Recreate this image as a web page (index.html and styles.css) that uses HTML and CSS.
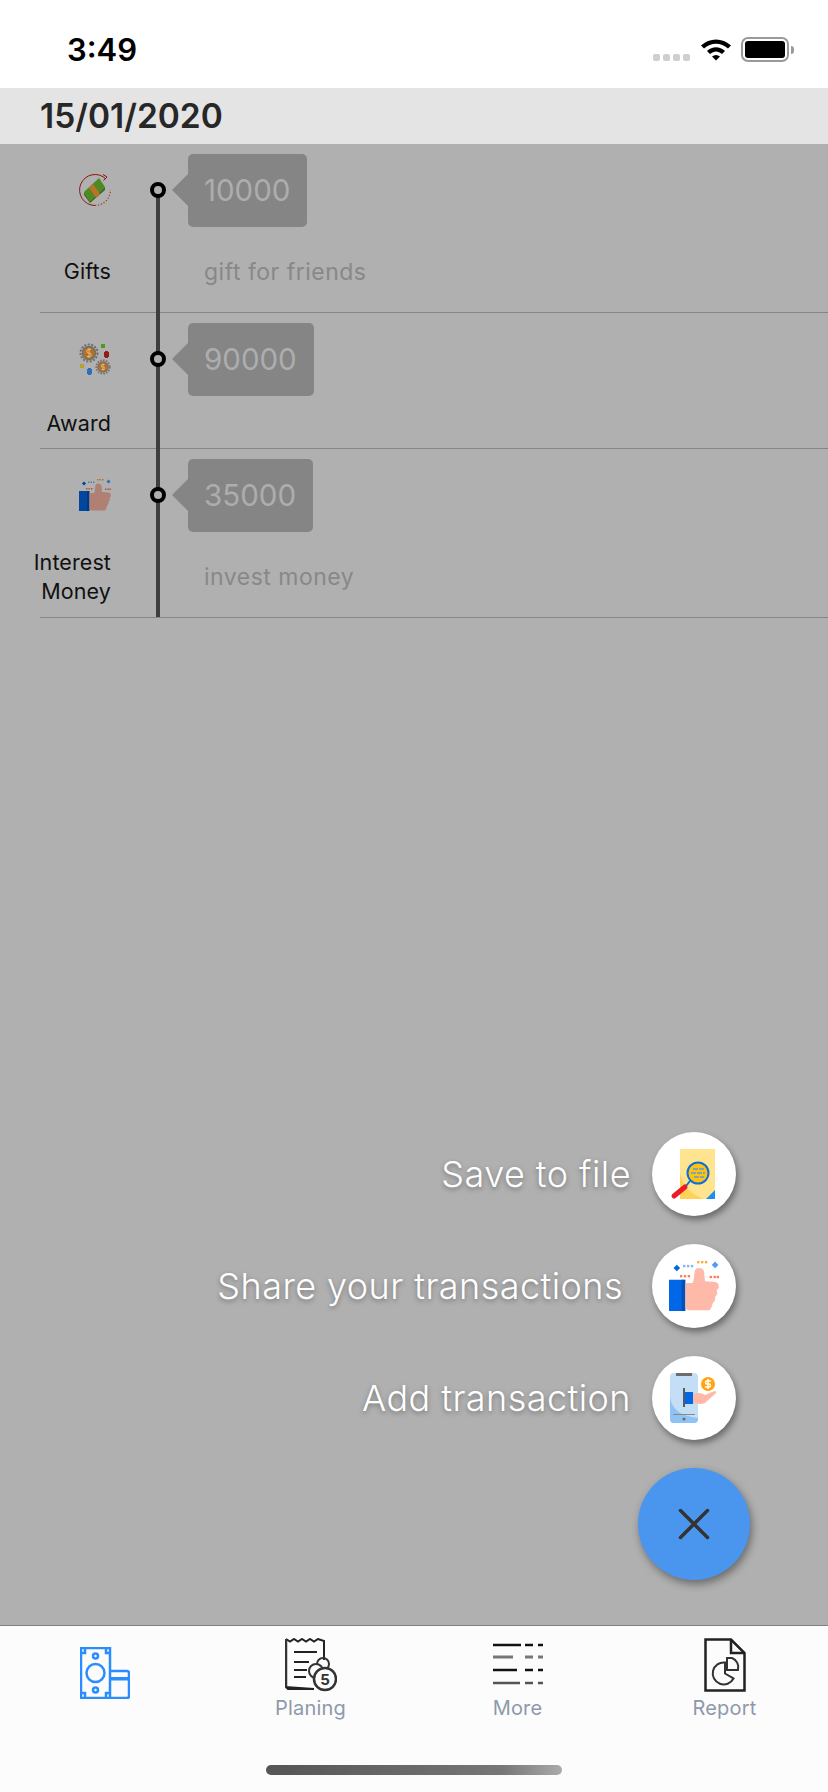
FILE: index.html
```html
<!DOCTYPE html>
<html lang="en">
<head>
<meta charset="utf-8">
<title>Transactions</title>
<link rel="stylesheet" href="styles.css">
</head>
<body>
<div class="app">
  <header class="status">
    <span class="time">3:49</span>
    <div class="status-icons">
      <div class="signal"><i></i><i></i><i></i><i></i></div>
      <svg class="wifi" width="32" height="24" viewBox="0 0 32 24">
        <path d="M1 8.500C9.500 .5 22.500 .5 31 8.500L28 11.500C21 5 11 5 4 11.500Z"/>
        <path d="M7 14C12.500 9 19.500 9 25 14L22 17C18 13.500 14 13.500 10 17Z"/>
        <path d="M12 19.500C14.500 17.500 17.500 17.500 20 19.500L16 23.500Z"/>
      </svg>
      <div class="battery"><div class="battery-body"><div class="battery-fill"></div></div><div class="battery-cap"></div></div>
    </div>
  </header>

  <div class="date-bar">15/01/2020</div>

  <main class="main">
    <section class="list">
      <article class="row row-a">
        <div class="cat">
          <svg class="cat-icon" viewBox="0 0 32 32">
            <path d="M27 5A15.500 15.500 0 1 0 16 31.500" fill="none" stroke="#8e1414" stroke-width="1"/>
            <path d="M24 .5L28 3L24.500 6.500" fill="none" stroke="#8e1414" stroke-width="1"/>
            <path d="M16 31.500A15.500 15.500 0 0 0 31.500 16" fill="none" stroke="#a5392b" stroke-width="1.200" stroke-dasharray="1.200 1.800"/>
            <path d="M5 18L20 4L26 13L11 27Z" fill="#4e8a22"/>
            <path d="M5 18L11 27L11 29L5 21Z" fill="#3f6e1c"/>
            <path d="M11 27L26 13L26 16L11 29Z" fill="#3a6a1a"/>
            <path d="M10 13.500L14 10L21 20L17 24Z" fill="#b9722a"/>
          </svg>
          <span class="cat-label">Gifts</span>
        </div>
        <div class="track"><span class="dot"></span><span class="line"></span></div>
        <div class="detail">
          <div class="bubble">10000</div>
          <p class="note">gift for friends</p>
        </div>
      </article>

      <article class="row row-b">
        <div class="cat">
          <svg class="cat-icon" viewBox="0 0 32 32">
            <circle cx="10" cy="10" r="8.500" fill="none" stroke="#6f6f6f" stroke-width="2" stroke-dasharray="2 1.500"/>
            <circle cx="10" cy="10" r="6.500" fill="#b8701f" stroke="#6f6f6f" stroke-width="1.500"/>
            <circle cx="24" cy="24" r="6.800" fill="none" stroke="#6f6f6f" stroke-width="1.600" stroke-dasharray="1.600 1.300"/>
            <circle cx="24" cy="24" r="5.200" fill="#b8701f" stroke="#6f6f6f" stroke-width="1.200"/>
            <path d="M12 6.500H9.500A1.500 1.500 0 0 0 9.500 10H10.500A1.500 1.500 0 0 1 10.500 13.500H8M10 5V15" fill="none" stroke="#dcc3a0" stroke-width=".9"/>
            <path d="M25.500 21.500H23.500A1 1 0 0 0 23.500 24H24.500A1 1 0 0 1 24.500 26.500H22.500M24 20.500V27.500" fill="none" stroke="#dcc3a0" stroke-width=".8"/>
            <rect x="22" y="1" width="4" height="4" fill="#4e9a1e"/>
            <rect x="25" y="9" width="5" height="5" fill="#961c1c"/>
            <rect x="26" y="8" width="3" height="7" fill="#961c1c"/>
            <rect x="1" y="21" width="4" height="4" fill="#b8a030"/>
            <rect x="8" y="26" width="5" height="5" fill="#2e6fb8"/>
            <rect x="9" y="25" width="3" height="7" fill="#2e6fb8"/>
          </svg>
          <span class="cat-label">Award</span>
        </div>
        <div class="track"><span class="dot"></span><span class="line"></span></div>
        <div class="detail">
          <div class="bubble">90000</div>
        </div>
      </article>

      <article class="row row-c">
        <div class="cat">
          <svg class="cat-icon cat-icon-dim" viewBox="0 0 32 32">
            <use href="#thumb"/>
          </svg>
          <span class="cat-label">Interest<br>Money</span>
        </div>
        <div class="track"><span class="dot"></span><span class="line"></span></div>
        <div class="detail">
          <div class="bubble">35000</div>
          <p class="note">invest money</p>
        </div>
      </article>
    </section>

    <section class="fab-menu">
      <div class="fab-item">
        <span class="fab-label">Save to file</span>
        <span class="mini">
          <svg class="mini-icon" viewBox="0 0 52 52">
            <path d="M12 1H47V51H12Z" fill="#ffe48f"/>
            <path d="M12 24C14 40 27 48 37 51H12Z" fill="#ffd257"/>
            <path d="M47 42V51H38Z" fill="#1e8cf5"/>
            <circle cx="30" cy="25" r="10.500" fill="#ffc20e" stroke="#0a6fdc" stroke-width="2"/>
            <path d="M25 21H37M23 25H37M26 29H36" stroke="#5a9fe0" stroke-width="1.500" stroke-dasharray="5 1"/>
            <path d="M22 33L18 38" stroke="#0a6fdc" stroke-width="2"/>
            <path d="M17 39L6 48" stroke="#e81d25" stroke-width="5" stroke-linecap="round"/>
          </svg>
        </span>
      </div>
      <div class="fab-item fab-item-share">
        <span class="fab-label">Share your transactions</span>
        <span class="mini">
          <svg class="mini-icon mini-thumb" viewBox="0 0 32 32">
            <use href="#thumb"/>
          </svg>
        </span>
      </div>
      <div class="fab-item">
        <span class="fab-label">Add transaction</span>
        <span class="mini">
          <svg class="mini-icon" viewBox="0 0 52 52">
            <rect x="2" y="1" width="28" height="50" rx="4" fill="#c4def6"/>
            <path d="M2 25C4 38 13 44 30 46V47A4 4 0 0 1 26 51H6A4 4 0 0 1 2 47Z" fill="#8fc3f3"/>
            <rect x="8" y="1" width="16" height="3" fill="#6d6d6d"/>
            <rect x="5" y="42" width="22" height="1" fill="#888"/>
            <circle cx="16" cy="47" r="1.500" fill="#6d6d6d"/>
            <rect x="15" y="16" width="2" height="19" fill="#5b5b5b"/>
            <rect x="17" y="20" width="8" height="12" fill="#0068e6"/>
            <path d="M25 22C30 20 34 21 37 23L44 20C47 18 50 20 47 22L37 31C32 33 28 31 25 31Z" fill="#ffb9a8"/>
            <circle cx="40" cy="12" r="7" fill="#ffa412"/>
            <path d="M43 9H39A1.500 1.500 0 0 0 39 12H41A1.500 1.500 0 0 1 41 15H37M40 7V17" fill="none" stroke="#fff" stroke-width="1.400"/>
          </svg>
        </span>
      </div>
      <button class="fab" type="button" aria-label="Close">
        <svg width="32" height="32" viewBox="0 0 32 32"><path d="M2.500 2.500L29.500 29.500M29.500 2.500L2.500 29.500" stroke="#333" stroke-width="3.500" stroke-linecap="round"/></svg>
      </button>
    </section>
  </main>

  <nav class="tabs">
    <div class="tab">
      <svg class="tab-icon tab-home" viewBox="0 0 50 52">
        <g fill="none" stroke="#2b8cff" stroke-width="2.500">
          <rect x="1" y="1" width="29" height="50"/>
          <circle cx="15.500" cy="26" r="9"/>
          <circle cx="15.500" cy="9" r="2.500"/>
          <circle cx="15.500" cy="43" r="2.500"/>
          <path d="M1 6H5V1M26 1V6H30M1 46H5V51M26 51V46H30"/>
          <path d="M30 24H47A2 2 0 0 1 49 26V49A2 2 0 0 1 47 51H30"/>
        </g>
        <rect x="30" y="30" width="19" height="3.500" fill="#2b8cff"/>
      </svg>
    </div>
    <div class="tab">
      <svg class="tab-icon tab-plan" viewBox="0 0 52 54">
        <path d="M1 1L5 3.500L9 1L13 3.500L17 1L21 3.500L25 1L29 3.500L33 1L39 3V22M29 51H3L1 49Z" fill="none" stroke="#222" stroke-width="2"/>
        <path d="M1 1V49" stroke="#333" stroke-width="2.500"/>
        <path d="M9 14H32M9 24H24M9 32H22M9 39H21" stroke="#222" stroke-width="2"/>
        <circle cx="38" cy="26" r="6" fill="none" stroke="#333" stroke-width="2"/>
        <circle cx="31" cy="33" r="7" fill="#fcfcfc" stroke="#333" stroke-width="2"/>
        <circle cx="40" cy="41" r="11" fill="#fcfcfc" stroke="#333" stroke-width="2.500"/>
        <text class="plan-s" x="40" y="46.500" text-anchor="middle">5</text>
      </svg>
      <span class="tab-label">Planing</span>
    </div>
    <div class="tab">
      <svg class="tab-icon tab-more" viewBox="0 0 50 44">
        <path d="M0 2H28M32 2H40M45 2H50" stroke="#111" stroke-width="2.500"/>
        <path d="M0 14H20M32 14H40M45 14H50" stroke="#777" stroke-width="3"/>
        <path d="M0 27H24M32 27H40M45 27H50" stroke="#111" stroke-width="2.500"/>
        <path d="M0 40H27M32 40H40M45 40H50" stroke="#555" stroke-width="2.500"/>
      </svg>
      <span class="tab-label">More</span>
    </div>
    <div class="tab">
      <svg class="tab-icon tab-report" viewBox="0 0 42 54">
        <path d="M1.500 1.500H27L40.500 15V52.500H1.500Z" fill="none" stroke="#222" stroke-width="2.500"/>
        <path d="M27 1.500V15H40.500" fill="none" stroke="#222" stroke-width="2.500"/>
        <path d="M21 24.500A11 11 0 1 0 29.500 40.500L21 35.500Z" fill="none" stroke="#333" stroke-width="2"/>
        <path d="M23 20V32H34A10 10 0 0 0 28 20Z" fill="none" stroke="#333" stroke-width="2"/>
      </svg>
      <span class="tab-label">Report</span>
    </div>
    <div class="home-bar"></div>
  </nav>
</div>

<svg class="defs" width="0" height="0" aria-hidden="true">
  <defs>
    <g id="thumb">
      <rect x="0" y="12" width="10" height="20" fill="#0068e6"/>
      <rect x="8" y="12" width="2.500" height="20" fill="#0052b8"/>
      <path d="M10.500 14L15 14Q16 12 16 10L16.500 6Q17 4.500 19 4.500Q22 4.500 22.500 7L23 13L30 13.500L31.500 14.500L32 17L30.500 19L31 21L29.500 23L29.500 25L28 27L27 30L26 31.500L12 31.500L10.500 30Z" fill="#ffb9a8"/>
      <rect x="3.500" y="3" width="3" height="3" fill="#0068e6" transform="rotate(45 5 4.500)"/>
      <g fill="#7fb5f0"><rect x="9" y="2.500" width="1.500" height="1.500"/><rect x="11.500" y="2.500" width="1.500" height="1.500"/><rect x="14" y="2.500" width="1.500" height="1.500"/></g>
      <rect x="28" y="1" width="3" height="3" fill="#4d9cf5" transform="rotate(45 29.500 2.500)"/>
      <g fill="#ffab30"><rect x="18" y="0" width="1.500" height="1.500"/><rect x="20.500" y="0" width="1.500" height="1.500"/><rect x="23" y="0" width="1.500" height="1.500"/></g>
      <g fill="#ff7a5c"><rect x="7" y="9" width="1.500" height="1.500"/><rect x="9.500" y="9" width="1.500" height="1.500"/><rect x="12" y="9" width="1.500" height="1.500"/><rect x="26" y="9.500" width="1.500" height="1.500"/><rect x="28.500" y="9.500" width="1.500" height="1.500"/><rect x="30.500" y="9.500" width="1.500" height="1.500"/></g>
    </g>
  </defs>
</svg>
</body>
</html>
```
FILE: styles.css
```css
* { box-sizing: border-box; }
html, body { margin: 0; padding: 0; }
body { font-family: Inter, "Liberation Sans", sans-serif; background: #fff; }
.defs { position: absolute; }

.app { width: 828px; height: 1792px; display: flex; flex-direction: column; overflow: hidden; }

.status { height: 88px; flex: none; background: #fff; display: flex; justify-content: space-between; padding: 0 34px 0 67px; }
.time { font-size: 31px; font-weight: 600; color: #000; line-height: 36px; margin-top: 32px; }
.status-icons { display: flex; align-items: flex-start; padding-top: 37px; }
.signal { display: flex; gap: 3px; margin-top: 17px; margin-right: 10px; }
.signal i { width: 7px; height: 7px; border-radius: 2px; background: #cfcfcf; display: block; }
.wifi { fill: #000; margin-right: 9px; }
.battery { display: flex; align-items: center; height: 25px; }
.battery-body { width: 48px; height: 25px; border: 2px solid #9a9a9a; border-radius: 7px; padding: 2px; }
.battery-fill { height: 100%; background: #000; border-radius: 3px; }
.battery-cap { width: 3px; height: 8px; background: #9a9a9a; border-radius: 0 3px 3px 0; margin-left: 2px; }

.date-bar { height: 56px; flex: none; background: #e4e4e4; color: #272727; font-size: 33.500px; font-weight: 600; line-height: 56px; padding-left: 40px; }

.main { flex: 1; background: #b0b0b0; display: flex; flex-direction: column; min-height: 0; }
.list { padding-left: 40px; }

.row { display: grid; grid-template-columns: 71px 55px 1fr; border-bottom: 1px solid #858585; }
.row-a { height: 169px; }
.row-b { height: 136px; }
.row-c { height: 169px; }

.cat { display: flex; flex-direction: column; align-items: flex-end; text-align: right; padding-top: 30px; margin-left: -30px; white-space: nowrap; }
.cat-icon { width: 32px; height: 32px; display: block; flex: none; }
.cat-icon-dim { filter: brightness(.69); }
.cat-label { font-size: 21.500px; line-height: 29px; color: #111; letter-spacing: .1px; }
.row-a .cat-label { margin-top: 51px; }
.row-b .cat-label { margin-top: 34px; }
.row-c .cat-label { margin-top: 37px; }

.track { display: flex; flex-direction: column; align-items: center; width: 16px; justify-self: end; padding-top: 38px; position: relative; }
.dot { width: 16px; height: 16px; border-radius: 50%; border: 4.500px solid #000; background: #b0b0b0; flex: none; position: relative; z-index: 1; }
.line { width: 4px; background: #3e3e3e; position: absolute; left: 6px; top: 0; bottom: 0; }
.row-a .line { top: 46px; bottom: -1px; }
.row-b .line { bottom: -1px; }

.detail { padding: 10px 0 0 22px; min-width: 0; }
.bubble { display: inline-block; position: relative; background: #858585; color: #adadad; font-size: 29.500px; line-height: 73px; height: 73px; padding: 0 17px 0 16px; border-radius: 5px; }
.bubble::before { content: ""; position: absolute; left: -16px; top: 20px; border-style: solid; border-width: 16px 16px 16px 0; border-color: transparent #858585 transparent transparent; }
.note { margin: 0; font-size: 23px; line-height: 28px; color: #888; padding-left: 16px; letter-spacing: .5px; }
.row-a .note { margin-top: 31px; }
.row-c .note { margin-top: 31px; }

.fab-menu { margin-top: auto; display: flex; flex-direction: column; align-items: flex-end; padding: 0 78px 45px 0; }
.fab-item { display: flex; align-items: center; justify-content: flex-end; height: 112px; margin-right: 14px; }
.fab-label { color: #fff; font-size: 36px; font-weight: 350; letter-spacing: .45px; line-height: 44px; text-shadow: 0 2px 5px rgba(0, 0, 0, .35); margin-right: 21px; white-space: nowrap; }
.fab-item-share .fab-label { margin-right: 29px; }
.mini { width: 84px; height: 84px; border-radius: 50%; background: #fff; box-shadow: 2px 4px 6px rgba(0, 0, 0, .4); display: flex; align-items: center; justify-content: center; }
.mini-icon { width: 52px; height: 52px; display: block; }
.mini-thumb { width: 50px; height: 50px; }
.fab { width: 112px; height: 112px; border: 0; padding: 0; border-radius: 50%; background: #4a96ef; box-shadow: 2px 4px 8px rgba(0, 0, 0, .4); display: flex; align-items: center; justify-content: center; margin-top: 14px; }

.tabs { height: 167px; flex: none; background: #fcfcfc; border-top: 1px solid #7f7f7f; display: grid; grid-template-columns: repeat(4, 1fr); position: relative; }
.tab { display: flex; flex-direction: column; align-items: center; padding-top: 12px; }
.tab-icon { display: block; }
.tab-home { width: 50px; height: 52px; margin-top: 9px; margin-left: 2px; }
.tab-plan { width: 52px; height: 54px; }
.tab-more { width: 50px; height: 44px; margin-top: 5px; margin-bottom: 5px; }
.tab-report { width: 42px; height: 54px; }
.plan-s { font-size: 15px; font-weight: 700; fill: #333; font-family: Inter, "Liberation Sans", sans-serif; }
.tab-label { font-size: 20px; line-height: 28px; color: #8e99ab; letter-spacing: .2px; margin-top: 2px; }
.home-bar { position: absolute; left: 266px; top: 139px; width: 296px; height: 10px; border-radius: 5px; background: linear-gradient(90deg, #555 0%, #666 40%, #777 80%, #aaa 100%); }
```
